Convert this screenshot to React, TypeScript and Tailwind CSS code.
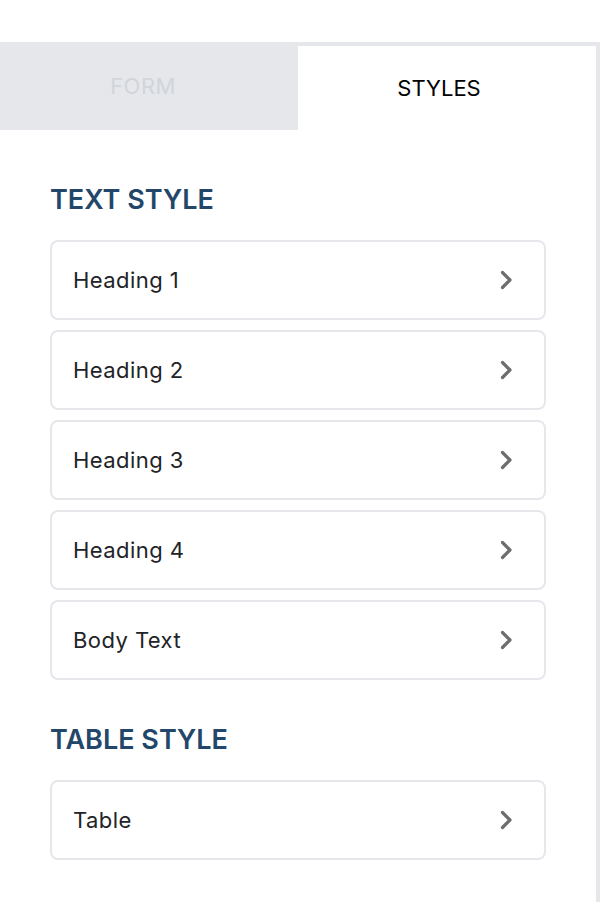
import React from "react";

function Chevron() {
  return (
    <svg width="24" height="24" viewBox="0 0 24 24" fill="none" aria-hidden="true">
      <path d="M8.5 4.5l7.5 7.5-7.5 7.5" stroke="#6e6e6e" strokeWidth="3.2" strokeLinecap="round" strokeLinejoin="round" />
    </svg>
  );
}

function Item({ label }: { label: string }) {
  return (
    <div className="flex h-[80px] items-center justify-between rounded-lg border-2 border-[#e5e7eb] bg-white pl-[21px] pr-[26px]">
      <span className="text-[22px] leading-none tracking-[0.02em] text-[#222326]">{label}</span>
      <Chevron />
    </div>
  );
}

function Section({ title, items }: { title: string; items: string[] }) {
  return (
    <div className="flex flex-col">
      <h2 className="h-[32px] text-[27px] font-semibold leading-[32px] text-[#23476a]">{title}</h2>
      <div className="mt-[24px] flex flex-col gap-[10px]">
        {items.map((i) => (
          <Item key={i} label={i} />
        ))}
      </div>
    </div>
  );
}

export default function App() {
  return (
    <div className="h-[902px] w-[600px] bg-white pt-[42px]" style={{ fontFamily: "Inter, 'Noto Sans', sans-serif" }}>
      <div className="flex h-[860px] flex-col border-r-4 border-[#e5e7eb]">
        <div className="flex h-[88px]">
          <div className="flex w-[298px] items-center justify-center bg-[#e5e7eb] pr-[12px] text-[22px] tracking-[0.02em] text-[#d1d5db]">FORM</div>
          <div className="flex flex-1 items-center justify-center border-t-4 border-[#e5e7eb] pr-[16px] text-[22px] text-black">STYLES</div>
        </div>
        <div className="flex flex-col gap-[44px] px-[50px] pt-[54px]">
          <Section title="TEXT STYLE" items={["Heading 1", "Heading 2", "Heading 3", "Heading 4", "Body Text"]} />
          <Section title="TABLE STYLE" items={["Table"]} />
        </div>
      </div>
    </div>
  );
}
